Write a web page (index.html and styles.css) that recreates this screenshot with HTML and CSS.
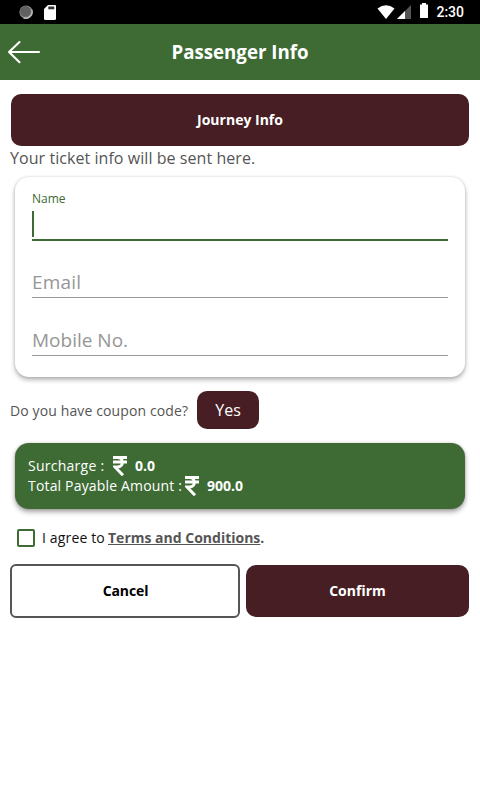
FILE: index.html
```html
<!DOCTYPE html>
<html lang="en">

<head>
    <meta charset="UTF-8">
    <meta name="viewport" content="width=device-width, initial-scale=1.0">
    <title>Passenger Info</title>
    <link rel="stylesheet" href="styles.css">
</head>

<body>
    <div class="statusBar">
        <svg class="recordIcon" width="16" height="16" viewBox="0 0 16 16">
            <circle cx="8" cy="8" r="6.6" fill="#888" />
            <path d="M13.6 5.5A6.3 6.3 0 0 1 5.5 13.8" fill="none" stroke="#bbb" stroke-width="1.4" />
            <circle cx="7.4" cy="7.4" r="5.4" fill="#606060" />
        </svg>
        <svg class="sdIcon" width="12" height="15" viewBox="0 0 12 15">
            <path d="M4 0h7a1 1 0 0 1 1 1v12.5a1.5 1.5 0 0 1-1.5 1.5h-9A1.5 1.5 0 0 1 0 13.5V4z" fill="#fff" />
            <path d="M4.3 1.5h6v2.800h-6z" fill="#333" />
        </svg>
        <div class="statusRight">
            <svg class="wifiIcon" width="18" height="14" viewBox="0 0 18 14">
                <path d="M0.5 3.5Q9-3 17.5 3.5L9 14z" fill="#fff" />
            </svg>
            <svg class="signalIcon" width="14" height="14" viewBox="0 0 14 14">
                <path d="M14 0v14H0z" fill="#555" />
                <path d="M8 6v8H0z" fill="#fff" />
            </svg>
            <svg class="batteryIcon" width="8" height="15" viewBox="0 0 8 15">
                <path d="M2 0h4v1.5h2V15H0V1.5h2z" fill="#fff" />
            </svg>
            <span class="clock">2:30</span>
        </div>
    </div>

    <header class="header">
        <svg class="backIcon" width="34" height="24" viewBox="0 0 34 24">
            <path d="M12.5 2L2 12l10.5 10.2M2 12h30" fill="none" stroke="#fff" stroke-width="2.1" stroke-linecap="round" stroke-linejoin="round" />
        </svg>
        <h1 class="title">Passenger Info</h1>
    </header>

    <main class="content">
        <button type="button" class="journeyButton">Journey Info</button>
        <p class="ticketText">Your ticket info will be sent here.</p>

        <form class="infoCard">
            <div class="field fieldActive">
                <span class="fieldLabel">Name</span>
                <div class="caret"></div>
            </div>
            <div class="field">Email</div>
            <div class="field">Mobile No.</div>
        </form>

        <div class="couponBox">
            <span class="couponWord">Do you have coupon code?</span>
            <button type="button" class="couponButton">Yes</button>
        </div>

        <div class="fareCard">
            <div class="fareRow">
                <span class="surchargeWord">Surcharge :</span>
                <svg class="rupee" width="14" height="20" viewBox="0 0 14 20">
                    <path d="M0 1.5h14M0 6h14M0 1.5h4.5c6.5 0 6.5 9.5 0 9.5H2L10 19.2" fill="none" stroke="#fff" stroke-width="3" />
                </svg>
                <b>0.0</b>
            </div>
            <div class="fareRow">
                <span class="totalWord">Total Payable Amount :</span>
                <svg class="rupee" width="14" height="20" viewBox="0 0 14 20">
                    <path d="M0 1.5h14M0 6h14M0 1.5h4.5c6.5 0 6.5 9.5 0 9.5H2L10 19.2" fill="none" stroke="#fff" stroke-width="3" />
                </svg>
                <b>900.0</b>
            </div>
        </div>

        <div class="agreeBox">
            <span class="checkBox"></span>
            <span class="agreeWord">I agree to</span>
            <b class="terms"><u>Terms and Conditions</u>.</b>
        </div>

        <div class="buttonBox">
            <button type="button" class="cancelButton">Cancel</button>
            <button type="button" class="confirmButton">Confirm</button>
        </div>
    </main>
</body>

</html>
```
FILE: styles.css
```css
* {
    margin: 0;
    padding: 0;
    box-sizing: border-box;
}

body {
    font-family: "Open Sans", "Noto Sans", sans-serif;
    font-size: 14px;
    color: #555;
    background-color: #fff;
}

svg {
    display: block;
    flex: none;
}

button {
    font-family: inherit;
    font-size: 14px;
    font-weight: bold;
    color: #fff;
    background-color: #461e23;
    border: 0;
    border-radius: 10px;
}

.statusBar {
    display: flex;
    align-items: center;
    height: 24px;
    padding: 0 16px 0 18px;
    background-color: #000;
}

.sdIcon {
    margin-left: 10px;
}

.statusRight {
    display: flex;
    align-items: center;
    height: 24px;
    margin-left: auto;
}

.signalIcon {
    margin: 0 0 1px 2px;
}

.batteryIcon {
    margin: 0 8px 3px 9px;
}

.clock {
    font-family: Roboto, sans-serif;
    font-size: 14px;
    font-weight: 500;
    color: #fff;
}

.header {
    display: grid;
    grid-template-columns: 34px 1fr 34px;
    align-items: center;
    height: 56px;
    padding: 0 7px;
    background-color: #3d6b33;
}

.title {
    padding-bottom: 2px;
    font-size: 18.7px;
    color: #fff;
    text-align: center;
}

.content {
    padding: 14px 11px 0 10px;
}

.journeyButton {
    display: block;
    width: 458px;
    height: 52px;
    margin-left: 1px;
    padding-bottom: 2px;
}

.ticketText {
    font-size: 16px;
    line-height: 24px;
    letter-spacing: 0.06px;
}

.infoCard {
    height: 200px;
    margin: 7px 4px 0 5px;
    padding: 12px 17px;
    border-radius: 14px;
    background-color: #fff;
    box-shadow: 0 3px 5px rgba(0, 0, 0, 0.28), 0 0 3px rgba(0, 0, 0, 0.16);
}

.field {
    height: 58px;
    padding-top: 29px;
    border-bottom: 1px solid #999;
    font-size: 19px;
    line-height: 27px;
    color: #969696;
}

.fieldActive {
    height: 52px;
    padding-top: 0;
    border-bottom: 2px solid #3d6b33;
}

.fieldActive + .field {
    height: 57px;
    padding-top: 28px;
    letter-spacing: 0.2px;
}

.fieldLabel {
    display: block;
    font-size: 12px;
    line-height: 20px;
    color: #3d6b33;
}

.caret {
    width: 2px;
    height: 26px;
    margin-top: 2px;
    background-color: #3d6b33;
}

.couponBox {
    display: flex;
    align-items: center;
    margin-top: 14px;
}

.couponWord {
    width: 187px;
    letter-spacing: 0.12px;
    white-space: nowrap;
}

.couponButton {
    width: 62px;
    height: 38px;
    font-size: 16px;
    font-weight: normal;
}

.fareCard {
    height: 66px;
    margin: 14px 4px 0 5px;
    padding: 13px;
    border-radius: 14px;
    color: #fff;
    background-color: #3d6b33;
    box-shadow: 0 3px 5px rgba(0, 0, 0, 0.35), 0 0 3px rgba(0, 0, 0, 0.16);
}

.fareRow {
    display: flex;
    height: 20px;
    line-height: 20px;
}

.surchargeWord {
    width: 85px;
    letter-spacing: 0.25px;
}

.totalWord {
    width: 157px;
    letter-spacing: 0.17px;
    white-space: nowrap;
}

.rupee {
    margin-right: 8px;
}

.agreeBox {
    display: flex;
    align-items: center;
    height: 20px;
    margin: 19px 0 0 7px;
}

.checkBox {
    width: 18px;
    height: 18px;
    border: 2px solid #3d6b33;
    border-radius: 2px;
}

.agreeWord {
    width: 66px;
    margin-left: 7px;
    padding-bottom: 2px;
    letter-spacing: 0.15px;
    color: #111;
}

.terms {
    padding-bottom: 2px;
}

.buttonBox {
    display: flex;
    align-items: center;
    gap: 6px;
    margin-top: 16px;
}

.cancelButton {
    width: 230px;
    height: 54px;
    padding: 0 0 2px 1px;
    letter-spacing: -0.1px;
    color: #000;
    background-color: #fff;
    border: 2px solid #555;
    border-radius: 6px;
}

.confirmButton {
    width: 223px;
    height: 52px;
    padding-bottom: 2px;
}
```
